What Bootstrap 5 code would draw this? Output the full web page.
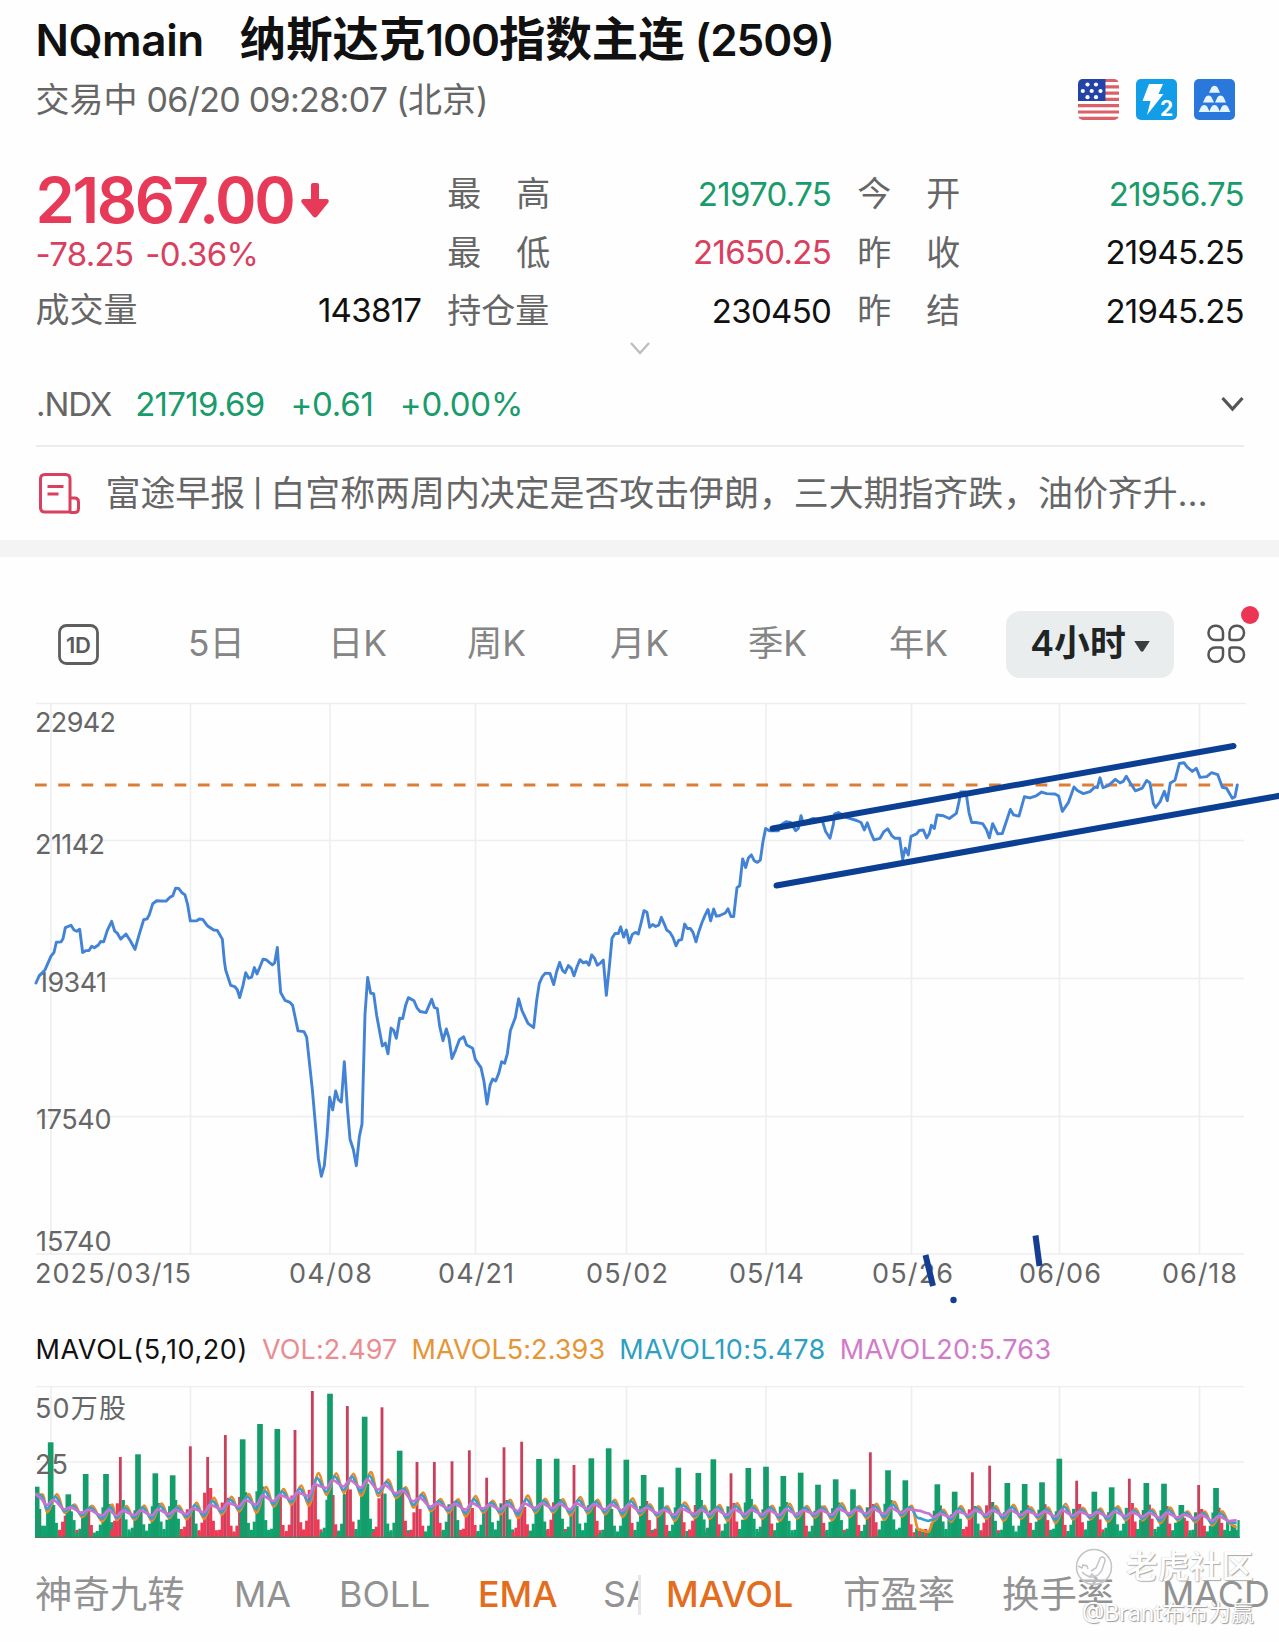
<!DOCTYPE html>
<html lang="zh-CN">
<head>
<meta charset="utf-8">
<meta name="viewport" content="width=device-width, initial-scale=1">
<title>NQmain 纳斯达克100指数主连</title>
<link href="https://cdn.jsdelivr.net/npm/bootstrap@5.3.0/dist/css/bootstrap.min.css" rel="stylesheet">
<style>
  body { font-family: Inter, "Noto Sans CJK SC", sans-serif; background: #fefefe; color: #111; line-height: 1; overflow: hidden; }
  .screen { width: 1279px; height: 1642px; overflow: hidden; }
  .screen span, .screen div { white-space: nowrap; }
  .inset { padding-left: 35.5px; padding-right: 35px; }
  .grey { color: #666; }
  .up { color: #199b6b; }
  .down { color: #d9405f; }
  .title-row { height: 77px; padding-top: 2px; font-size: 46.4px; font-weight: 600; gap: 36px; }
  .title-row .code { font-size: 44px; letter-spacing: -.4px; }
  .title-row .latin { font-size: 44px; letter-spacing: -1px; }
  .sub-row { height: 45px; font-size: 34px; }
  .sub-row .stamp { letter-spacing: -.68px; }
  .market-icons { gap: 17px; padding-right: 9px; }
  .quote { padding-top: 43px; height: 218px; gap: 26px; font-size: 34px; }
  .quote .first { width: 386px; }
  .quote .second { width: 384px; }
  .quote .third { width: 387px; }
  .quote .line { height: 58.5px; }
  .quote .spread { width: 103px; }
  .num { font-size: 33px; letter-spacing: -.7px; }
  .price-line { height: 70px; gap: 7px; }
  .price { font-size: 63px; font-weight: 600; color: #e73a58; letter-spacing: -2.3px; }
  .change-line { height: 38px; gap: 12px; }
  .expand-row { height: 17px; }
  .index-row { height: 90px; padding-top: 6px; border-bottom: 2px solid #ececec; margin: 0 35px 0 36px; font-size: 33px; letter-spacing: -.7px; }
  .index-row .index-name { letter-spacing: -1.1px; }
  .index-row .move { letter-spacing: -.2px; margin-left: 26px; }
  .news-row { height: 93px; gap: 24.5px; font-size: 34.9px; padding-left: 38px; }
  .news-row .pipe { font-size: 27px; vertical-align: 3px; margin: 0 8px; font-weight: 500; }
  .band { height: 17px; background: #f4f4f4; }
  .period-row { height: 133px; padding-top: 41px; display: grid; grid-template-columns: 130px 140px 139px 143px 138px 141px 117px 201px 60px; padding-left: 58px; align-items: center; font-size: 35.3px; color: #858585; }
  .period-pill { width: 168px; height: 67px; border-radius: 14px; background: #e9edee; color: #212425; font-weight: 600; font-size: 35.8px; gap: 8px; }
  .more { width: 42px; height: 40px; }
  .more .dot { position: absolute; width: 18px; height: 18px; border-radius: 50%; background: #ec3555; left: 34px; top: -18px; }
  .legend-row { height: 76px; font-size: 27px; letter-spacing: .08px; gap: 14.2px; padding-top: 3px; }
  .legend-row .legend-title { letter-spacing: .58px; }
  .legend-row .legend-wide { letter-spacing: .33px; }
  .indicator-row { height: 102px; padding-top: 8px; font-size: 35.8px; color: #929292; }
  .indicator-row .cjk { font-size: 37.4px; }
  .price-set { width: 638px; height: 46px; padding-left: 35px; display: grid; grid-template-columns: 199px 105px 139px 125px 35px; overflow: hidden; }
  .volume-set { display: grid; grid-template-columns: 177px 159px 160px 116px; padding-left: 25px; border-left: 3px solid #e6e6e6; height: 40px; align-items: center; }
  .picked { color: #e36d1c; font-weight: 500; }
  .clip { overflow: hidden; }
  .stamp-mark { position: absolute; left: 1075px; top: 1547px; width: 190px; color: #fff; text-shadow: 1px 1px 1px #999, -.5px -.5px 1px #c8c8c8; }
  .stamp-mark .brand { font-size: 31.8px; font-weight: 500; margin-left: 12px; opacity: .85; }
  .stamp-mark .author { font-size: 23px; margin-left: 7px; margin-top: 16px; }
  svg { display: block; }
  svg text { font-family: Inter, "Noto Sans CJK SC", sans-serif; font-size: 27px; fill: #666; }
</style>
<script src="https://cdn.jsdelivr.net/npm/bootstrap@5.3.0/dist/js/bootstrap.bundle.min.js"></script>
</head>
<body>
<main class="screen position-relative">
  <header>
    <div class="title-row inset d-flex align-items-center">
      <span class="code">NQmain</span>
      <span>纳斯达克<span class="latin">100</span>指数主连<span class="latin"> (2509)</span></span>
    </div>
    <div class="sub-row inset d-flex align-items-center justify-content-between">
      <span class="grey">交易中<span class="stamp"> 06/20 09:28:07 (</span>北京<span class="stamp">)</span></span>
      <div class="market-icons d-flex">
        <svg width="41" height="41" viewBox="0 0 41 41">
          <clipPath id="flag"><rect width="41" height="41" rx="5"/></clipPath>
          <g clip-path="url(#flag)"><rect width="41" height="41" fill="#fff"/>
            <path d="M0 1.5h41M0 7.8h41M0 14.1h41M0 20.4h41M0 26.7h41M0 33h41M0 39.4h41" stroke="#dc6068" stroke-width="3.2"/>
            <rect width="27.5" height="22" fill="#2343a8"/>
            <g fill="#fff"><circle cx="9.5" cy="5.5" r="2.1"/><circle cx="18" cy="5.5" r="2.1"/><circle cx="4.8" cy="12" r="2.1"/><circle cx="13.7" cy="12" r="2.1"/><circle cx="22.5" cy="12" r="2.1"/><circle cx="9.5" cy="18.2" r="2.1"/><circle cx="18" cy="18.2" r="2.1"/></g></g>
        </svg>
        <svg width="41" height="41" viewBox="0 0 41 41"><rect width="41" height="41" rx="5" fill="#129de8"/>
          <path d="M13 5h14l-4.500 10h5L11 36l3.500-14H6.500z" fill="#fff"/>
          <text x="24" y="36.500" style="font-size:21px;font-weight:700;fill:#fff">2</text></svg>
        <svg width="41" height="41" viewBox="0 0 41 41"><rect width="41" height="41" rx="5" fill="#2b78dc"/>
          <g fill="#e4f5ff"><path id="bar" d="M15 13.800l2.300-5q1-2 3.200-2t3.200 2l2.300 5z"/><use href="#bar" x="-6" y="9.600"/><use href="#bar" x="6" y="9.600"/><use href="#bar" x="-10.300" y="19.300"/><use href="#bar" y="19.300"/><use href="#bar" x="10.300" y="19.300"/></g></svg>
      </div>
    </div>
  </header>

  <section class="quote inset d-flex">
    <div class="first">
      <div class="price-line d-flex align-items-center"><span class="price">21867.00</span>
        <svg width="28" height="35" viewBox="0 0 28 35"><path d="M10 2q0-2 2-2h4q2 0 2 2v14h8q3 1 1 4L16 33.500q-2 2-4 0L1 20q-2-3 1-4h8z" fill="#e73a58"/></svg></div>
      <div class="change-line num down d-flex align-items-center"><span>-78.25</span><span>-0.36%</span></div>
      <div class="line d-flex align-items-center justify-content-between mt-2"><span class="grey">成交量</span><span class="num">143817</span></div>
    </div>
    <div class="second">
      <div class="line d-flex align-items-center justify-content-between"><span class="spread grey d-flex justify-content-between"><span>最</span><span>高</span></span><span class="num up">21970.75</span></div>
      <div class="line d-flex align-items-center justify-content-between"><span class="spread grey d-flex justify-content-between"><span>最</span><span>低</span></span><span class="num down">21650.25</span></div>
      <div class="line d-flex align-items-center justify-content-between"><span class="grey">持仓量</span><span class="num">230450</span></div>
    </div>
    <div class="third">
      <div class="line d-flex align-items-center justify-content-between"><span class="spread grey d-flex justify-content-between"><span>今</span><span>开</span></span><span class="num up">21956.75</span></div>
      <div class="line d-flex align-items-center justify-content-between"><span class="spread grey d-flex justify-content-between"><span>昨</span><span>收</span></span><span class="num">21945.25</span></div>
      <div class="line d-flex align-items-center justify-content-between"><span class="spread grey d-flex justify-content-between"><span>昨</span><span>结</span></span><span class="num">21945.25</span></div>
    </div>
  </section>
  <div class="expand-row d-flex justify-content-center"><svg width="22" height="16" viewBox="0 0 22 16"><path d="M2 3l9 10 9-10" fill="none" stroke="#bdbdbd" stroke-width="2.300"/></svg></div>

  <div class="index-row d-flex align-items-center">
    <span class="grey index-name">.NDX</span><span class="up ms-4">21719.69</span><span class="up move">+0.61</span><span class="up move">+0.00%</span>
    <svg class="ms-auto" width="23" height="16" viewBox="0 0 23 16"><path d="M1.500 2l10 11 10-11" fill="none" stroke="#555" stroke-width="3.200"/></svg>
  </div>
  <div class="news-row inset d-flex align-items-center">
    <svg width="43" height="43" viewBox="0 0 43 43" fill="none" stroke="#d8405d" stroke-width="3"><path d="M32 40H7q-4.500 0-4.500-4.500V7Q2.500 2.500 7 2.500h20.500Q32 2.500 32 7v33M32 26h4.500q4 0 4 4v6.500q0 4-4 4H32M9.500 14.500h16M9.500 22h11"/></svg>
    <span class="grey">富途早报<span class="pipe">|</span>白宫称两周内决定是否攻击伊朗，三大期指齐跌，油价齐升…</span>
  </div>
  <div class="band"></div>

  <nav class="period-row">
    <svg width="41" height="41" viewBox="0 0 41 41"><rect x="1.500" y="1.500" width="38" height="38" rx="7" fill="none" stroke="#5e5e5e" stroke-width="2.800"/><text x="8" y="28.500" textLength="25" style="font-size:22px;font-weight:600;fill:#5a5a5a">1D</text></svg>
    <span>5日</span><span>日K</span><span>周K</span><span>月K</span><span>季K</span><span>年K</span>
    <span class="period-pill d-flex align-items-center justify-content-center">4小时<svg class="mt-1" width="16" height="11" viewBox="0 0 17 12"><path d="M0 0h17L10 11q-1.500 1.500-3 0z" fill="#3b3e3f"/></svg></span>
    <span class="more position-relative"><svg width="40" height="40" viewBox="0 0 40 40" fill="none" stroke="#555" stroke-width="2.500"><path id="petal" d="M16 9v4.500q0 2.500-2.500 2.500H8.500A6.800 6.800 0 0 1 1.500 9V8.500A6.800 6.800 0 0 1 8.500 1.700H9A6.800 6.800 0 0 1 16 8.500z"/><use href="#petal" transform="matrix(-1 0 0 1 38.500 0)"/><use href="#petal" transform="matrix(1 0 0 -1 0 39.500)"/><use href="#petal" transform="matrix(-1 0 0 -1 38.500 39.500)"/></svg><i class="dot"></i></span>
  </nav>

  <svg width="1279" height="620" viewBox="0 690 1279 620">
    <path d="M36 703.500H1246M36 840.500H1244M36 978.500H1244M36 1116.500H1244M36 1254H1244M51 703V1254M190.500 703V1254M330 703V1254M475.500 703V1254M626.500 703V1254M766 703V1254M911.500 703V1254M1059.500 703V1254M1199.500 703V1254" stroke="#eee" stroke-width="1.600"/>
    <path d="M35 785H1233" stroke="#dd7c35" stroke-width="3" stroke-dasharray="11.700 11.570"/>
    <g>
      <text x="35" y="731.500" textLength="81">22942</text><text x="35" y="853.500" textLength="70">21142</text><text x="37" y="991.500" textLength="70">19341</text><text x="36" y="1129" textLength="75.500">17540</text><text x="36" y="1251" textLength="75.500">15740</text>
      <text x="35" y="1283" textLength="156">2025/03/15</text><text x="289" y="1283" textLength="83">04/08</text><text x="438" y="1283" textLength="76">04/21</text><text x="586" y="1283" textLength="82">05/02</text><text x="729" y="1283" textLength="75">05/14</text><text x="872" y="1283" textLength="81">05/26</text><text x="1019" y="1283" textLength="82">06/06</text><text x="1162" y="1283" textLength="75">06/18</text>
    </g>
    <g fill="none" stroke="#4283d6" stroke-width="2.900" stroke-linejoin="round" stroke-linecap="round">
      <polyline vector-effect="non-scaling-stroke" transform="translate(0 690) scale(.33333 .39541)" points="108,741 118,722 135,708 153,673 162,664 169,638 183,637 189,629 196,601 213,595 222,607 230,610 239,605 248,664 258,659 267,659 275,648 283,652 295,645 302,636 311,637 322,608 335,585 344,610 352,615 362,630 378,617 391,634 405,656 417,620 431,581 441,579 448,568 458,541 470,533 498,534 510,524 518,521 527,501 536,502 545,512 555,518 563,543 571,584 589,584 598,579 608,580 623,597 641,607 652,608 667,630 673,685 677,708 692,747 704,750 712,758 719,778 729,747 737,715 746,729 755,726 763,702 771,718 780,700 789,681 798,682 817,695 824,690 832,651 837,712 842,765 855,785 870,790 878,798 894,862 912,864 920,878 937,1010 955,1184 964,1230 973,1203 981,1130 989,1030 998,1062 1007,1014 1015,1036 1024,1042 1033,940 1042,1055 1050,1136 1060,1162 1069,1203 1078,1130 1086,1098 1095,820 1103,727 1112,767 1121,768 1130,823 1147,900 1156,893 1164,920 1173,855 1181,861 1189,881 1199,830 1208,831 1217,797 1225,778 1242,786 1251,804 1260,813 1278,816 1295,782 1303,803 1312,806 1319,850 1329,887 1339,857 1347,880 1356,932 1367,910 1378,885 1391,877 1400,898 1418,906 1426,934 1443,955 1452,990 1461,1047 1470,1000 1478,984 1487,989 1496,970 1505,940 1514,944 1522,920 1531,862 1546,828 1556,781 1566,811 1584,843 1601,854 1610,785 1618,742 1627,725 1636,716 1650,717 1661,745 1670,712 1679,689 1688,710 1695,715 1705,697 1714,704 1722,723 1731,700 1740,682 1750,690 1759,687 1767,696 1775,670 1784,679 1792,696 1802,690 1810,683 1819,772 1828,700 1836,628 1845,616 1855,616 1862,599 1871,625 1879,607 1888,640 1897,618 1906,613 1915,617 1923,590 1932,558 1941,562 1949,600 1958,593 1967,598 1976,595 1984,575 1993,592 2000,607 2010,613 2019,626 2028,647 2036,633 2045,631 2054,592 2062,603 2071,603 2079,613 2088,637 2097,610 2106,588 2115,570 2124,555 2132,584 2141,554 2149,572 2158,571 2176,564 2184,553 2193,573 2201,573 2211,500 2219,495 2228,427 2237,449 2245,425 2254,417 2263,432 2272,436 2281,430 2289,383 2297,350 2308,356 2335,356 2345,340 2358,333 2372,335 2387,356 2395,350 2403,318 2409,336 2438,325 2466,328 2477,358 2490,375 2500,340 2504,313 2515,310 2541,323 2570,330 2583,335 2593,354 2602,336 2612,360 2622,379 2640,375 2651,359 2663,351 2676,369 2685,375 2699,375 2708,428 2716,400 2725,417 2733,370 2750,364 2758,355 2770,354 2780,374 2788,363 2794,342 2803,350 2811,316 2830,318 2848,325 2869,312 2877,283 2882,258 2898,258 2907,310 2915,335 2927,335 2948,338 2960,354 2968,374 2978,338 2993,364 3007,363 3020,330 3031,302 3041,316 3057,319 3073,270 3090,273 3108,268 3125,258 3140,262 3165,263 3176,268 3187,307 3205,285 3214,264 3222,245 3232,254 3250,262 3270,257 3285,245 3292,247 3300,222 3309,247 3325,242 3346,226 3360,235 3370,231 3379,218 3390,234 3406,255 3427,248 3440,229 3450,235 3460,287 3467,297 3480,283 3493,256 3502,280 3511,235 3525,228 3538,186 3552,184 3562,195 3577,206 3589,198 3600,221 3620,219 3635,209 3653,214 3667,246 3680,249 3697,274 3705,270 3712,240"/>
    </g>
    <path d="M772.500 828.500L1233.500 746M776.500 885.500L1281 795.500" stroke="#0b3f94" stroke-width="6" stroke-linecap="round"/>
    <path d="M925.500 1255L933 1286M1035.500 1235.500L1039.500 1266" stroke="#153e92" stroke-width="6"/><circle cx="953.500" cy="1300" r="3.200" fill="#153e92"/>
  </svg>

  <div class="legend-row inset d-flex align-items-center">
    <span class="legend-title">MAVOL(5,10,20)</span><span style="color:#ea8c91">VOL:2.497</span><span style="color:#e59536">MAVOL5:2.393</span><span class="legend-wide" style="color:#2d9fc2">MAVOL10:5.478</span><span class="legend-wide" style="color:#d17bc8">MAVOL20:5.763</span>
  </div>
  <svg id="volume" width="1279" height="154" viewBox="0 1386 1279 154">
    <path d="M36 1386.500H1244M36 1462H1244M51 1386V1537M190.500 1386V1537M475.500 1386V1537M626.500 1386V1537M766 1386V1537M911.500 1386V1537M1059.500 1386V1537M1199.500 1386V1537" stroke="#eee" stroke-width="1.600"/>
    <text x="35" y="1417.500" textLength="91">50万股</text>
    <g id="bars"></g>
    <text x="35" y="1473.500">25</text>
    <g id="averages" fill="none" stroke-width="2.700" stroke-linejoin="round"></g>
    <path d="M35 1537.300H1240" stroke="#438260" stroke-width="1.200"/>
  </svg>

  <div class="indicator-row d-flex align-items-center">
    <div class="price-set align-items-center"><span class="cjk">神奇九转</span><span>MA</span><span>BOLL</span><span class="picked">EMA</span><span class="clip">SAR</span></div>
    <div class="volume-set"><span class="picked">MAVOL</span><span class="cjk">市盈率</span><span class="cjk">换手率</span><span>MACD</span></div>
  </div>
  <div class="stamp-mark">
    <div class="d-flex align-items-center">
      <svg width="39" height="39" viewBox="0 0 39 39" fill="none" stroke="#c4c4c8" stroke-width="1.500"><circle cx="19" cy="20" r="17.500" fill="#fff" fill-opacity=".35"/><path d="M3 19l4 2 1-3 4 1 1 3M7 25q5 5 11 5 6-1 9-7l3-9q0-4-3-4-2 0-3 4l-3 7-5 3M14 31l3-4 3 3"/></svg>
      <span class="brand">老虎社区</span>
    </div>
    <div class="author">@Brant布布为赢</div>
  </div>
</main>
<script>
// One entry per trading session: [x, top, colour, shorter bars' colours] on a grid three times finer than a pixel.
const sessions = [
 [110,500,'g','gg'],[152,367,'g','gg'],[205,523,'g','gr'],[257,462,'g','rg'],[318,462,'g','gg'],[361,411,'r','gr'],[414,403,'g','gg'],[466,460,'g','gg'],[518,466,'g','gg'],
 [571,379,'r','gr'],[623,411,'r','rr'],[676,345,'r','rr'],[728,358,'g','gr'],[780,312,'g','gg'],[832,327,'g','rg'],[885,330,'r','rr'],[937,213,'r','rr'],[990,221,'g','rg'],[1042,258,'r','rg'],[1094,290,'g','gg'],[1146,262,'r','gr'],[1199,392,'g','rg'],[1251,426,'r','rr'],[1303,426,'r','rg'],
 [1356,424,'r','gg'],[1408,391,'r','rr'],[1460,473,'r','gg'],[1512,382,'r','gg'],[1565,365,'r','rr'],[1617,417,'g','gg'],[1670,416,'g','gr'],[1722,435,'r','gg'],[1774,415,'g','rg'],[1826,385,'g','gg'],[1879,419,'g','rg'],[1931,465,'g','rg'],[1983,502,'g','rr'],[2035,443,'g','rg'],[2095,459,'g','gr'],[2140,418,'g','rg'],[2193,460,'r','rg'],[2245,444,'g','gg'],[2298,440,'g','rg'],[2350,468,'g','gg'],[2402,458,'g','rg'],[2454,494,'g','rg'],[2507,478,'g','gg'],[2559,508,'g','rg'],
 [2611,397,'r','rg'],[2664,451,'g','gg'],[2716,481,'g','rg'],[2812,493,'g','gg'],[2864,515,'g','gg'],[2917,457,'r','gr'],[2969,437,'r','gr'],[3022,489,'g','gg'],[3074,492,'g','rg'],[3126,487,'g','rg'],[3178,416,'g','rg'],[3230,482,'r','rg'],[3283,515,'g','rg'],[3335,502,'g','gg'],[3388,476,'r','rg'],[3439,489,'g','rg'],[3492,491,'g','rg'],[3544,555,'g','rg'],[3596,495,'r','rg'],[3648,504,'g','rg'],[3700,615,'g','gg']
];
const fill = { g: '#0fa46d', r: '#ee3a55' }, mix = { g: '#2f8d66', r: '#d8415a' };
let out = '';
const bar = (x, h, w, c) => { const l = Math.max(105, x - w / 2), r = Math.min(3719, x + w / 2); if (r > l) out += `<rect x="${(l / 3).toFixed(2)}" y="${(1537 - h / 3).toFixed(1)}" width="${((r - l) / 3).toFixed(2)}" height="${(h / 3).toFixed(1)}" fill="${c}"/>`; };
sessions.forEach(([x, top, c, side], i) => {
  const h = 651 - top, n = (i * 37 % 11) * 3, big = i > 9 && i < 22 ? 1.4 : 1;
  bar(x - 26, 12 + n * .4, 9.5, fill[side[1]]);
  bar(x - 17, 22 + n, 9.5, fill[side[1]]);
  bar(x - 9, Math.min(h * .5, 74 + n) * big, 9.5, i % 3 ? fill[side[1]] : mix[side[1]]);
  bar(x + 9, Math.min(h * .6, 84 + n) * big, 9.5, i % 3 ? fill[side[0]] : mix[side[0]]);
  bar(x + 17, 34 + n * .7, 9.5, fill[side[0]]);
  bar(x + 26, 12 + n * .4, 9.5, fill[i % 2 ? 'g' : 'r']);
});
// The quiet holiday session between the two neighbours that stand further apart.
[[2750,26],[2759,18],[2768,16],[2777,24]].forEach(([x, h], i) => bar(x, h, 9.5, i % 2 ? fill.r : fill.g));
sessions.forEach(([x, top, c]) => bar(x, 651 - top, c === 'g' ? 17 : 8.5, c === 'g' ? '#159c6b' : '#c9405d'));
document.getElementById('bars').innerHTML = out;

// Middle level of the three moving averages.
const level = [[100,530],[200,565],[257,575],[340,580],[560,575],[676,558],[780,540],[885,528],[937,510],[990,490],[1094,490],[1199,515],[1251,540],[1303,557],[1560,562],[1617,557],[1880,562],[1983,575],[2400,577],[2716,572],[2812,588],[2917,577],[3400,583],[3600,590],[3720,603]];
const at = x => { let i = 1; while (i < level.length - 1 && level[i][0] < x) i++; const [a, b] = [level[i - 1], level[i]]; return a[1] + (b[1] - a[1]) * (x - a[0]) / (b[0] - a[0]); };
const average = (amp, lag, colour, dip) => {
  const p = [[105, 522]];
  sessions.forEach(([x, top], i) => {
    const k = amp * (.35 + (651 - top) / 520) * (i % 3 === 1 ? 1.35 : .95);
    if (x > 120) p.push([x - 11, at(x - 11) + k]);
    if (x < 3690) p.push([x + lag, at(x + lag) - k]);
    if (x === 2716) p.push([2755, 572 + dip * .8], [2785, 580 + dip * .8]);
  });
  p.push([3710, 601 + dip * .3]);
  let d = `M${p[0][0] / 3} ${1320 + p[0][1] / 3}`;
  for (let i = 1; i < p.length; i++) { const t = (p[i][0] - p[i - 1][0]) / 9, a = p[i - 1], b = p[i]; d += `C${a[0] / 3 + t} ${1320 + a[1] / 3} ${b[0] / 3 - t} ${1320 + b[1] / 3} ${b[0] / 3} ${1320 + b[1] / 3}`; }
  return `<path d="${d}" stroke="${colour}"/>`;
};
document.getElementById('averages').innerHTML = average(27, 19, '#e98b26', 70) + average(19, 14, '#3a9fcc', 28) + average(9, 7, '#c873d2', 0);
</script>
</body>
</html>
